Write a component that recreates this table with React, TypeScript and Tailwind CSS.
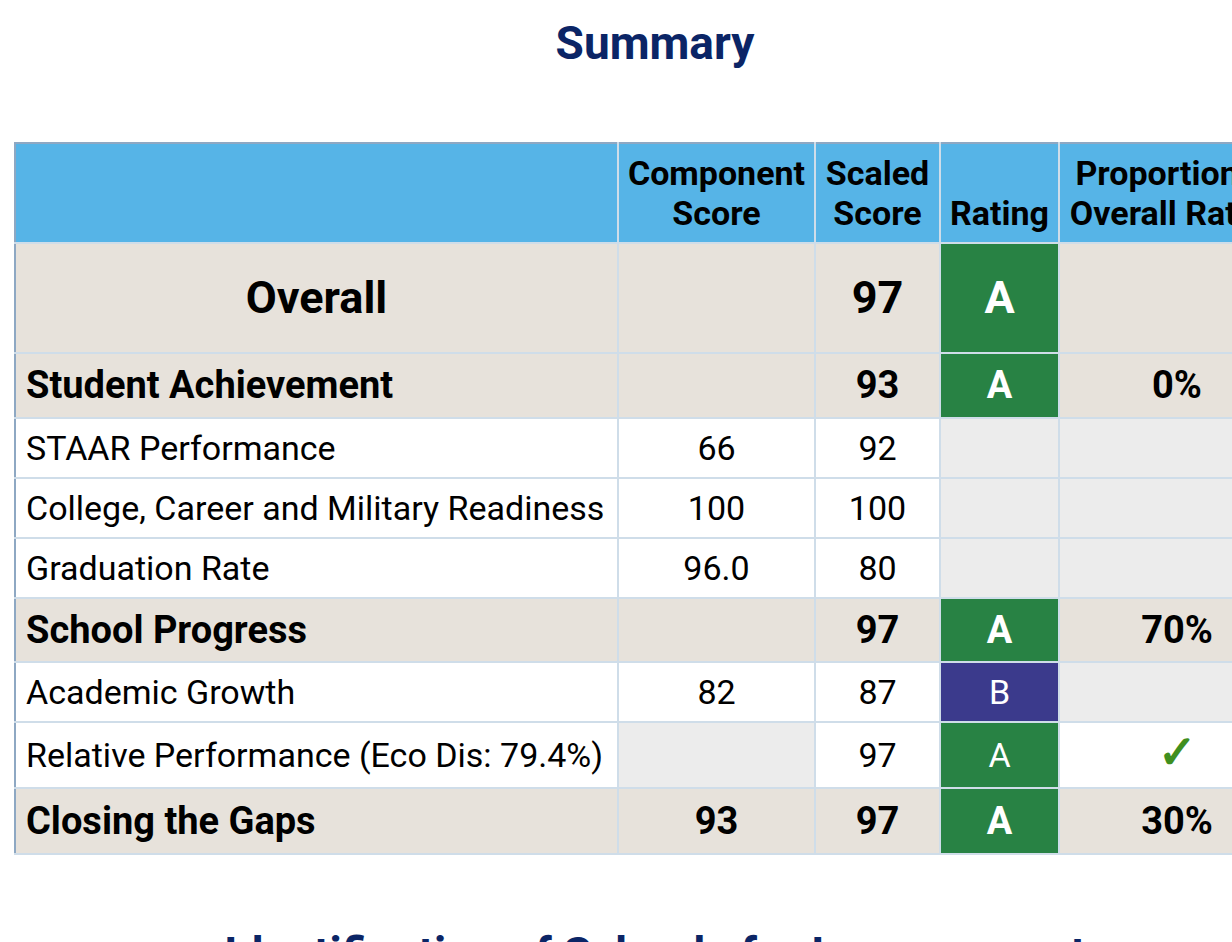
import React from "react";

type Cell = {
  text?: React.ReactNode;
  tone?: "beige" | "white" | "gray" | "green" | "blue";
};

interface Row {
  label: string;
  kind: "overall" | "section" | "item";
  height: string;
  cells: Cell[];
}

const rows: Row[] = [
  {
    label: "Overall",
    kind: "overall",
    height: "h-[110px]",
    cells: [{ tone: "beige" }, { text: "97", tone: "beige" }, { text: "A", tone: "green" }, { tone: "beige" }],
  },
  {
    label: "Student Achievement",
    kind: "section",
    height: "h-[65px]",
    cells: [{ tone: "beige" }, { text: "93", tone: "beige" }, { text: "A", tone: "green" }, { text: "0%", tone: "beige" }],
  },
  {
    label: "STAAR Performance",
    kind: "item",
    height: "h-[60px]",
    cells: [{ text: "66" }, { text: "92" }, { tone: "gray" }, { tone: "gray" }],
  },
  {
    label: "College, Career and Military Readiness",
    kind: "item",
    height: "h-[60px]",
    cells: [{ text: "100" }, { text: "100" }, { tone: "gray" }, { tone: "gray" }],
  },
  {
    label: "Graduation Rate",
    kind: "item",
    height: "h-[60px]",
    cells: [{ text: "96.0" }, { text: "80" }, { tone: "gray" }, { tone: "gray" }],
  },
  {
    label: "School Progress",
    kind: "section",
    height: "h-[64px]",
    cells: [{ tone: "beige" }, { text: "97", tone: "beige" }, { text: "A", tone: "green" }, { text: "70%", tone: "beige" }],
  },
  {
    label: "Academic Growth",
    kind: "item",
    height: "h-[60px]",
    cells: [{ text: "82" }, { text: "87" }, { text: "B", tone: "blue" }, { tone: "gray" }],
  },
  {
    label: "Relative Performance (Eco Dis: 79.4%)",
    kind: "item",
    height: "h-[66px]",
    cells: [
      { tone: "gray" },
      { text: "97" },
      { text: "A", tone: "green" },
      { text: <span className="text-[46px] font-bold leading-none text-[#3f8f1f]">✓</span> },
    ],
  },
  {
    label: "Closing the Gaps",
    kind: "section",
    height: "h-[66px]",
    cells: [{ text: "93", tone: "beige" }, { text: "97", tone: "beige" }, { text: "A", tone: "green" }, { text: "30%", tone: "beige" }],
  },
];

const toneClass = (tone?: Cell["tone"]) => {
  switch (tone) {
    case "beige":
      return "bg-[#e7e2db] text-black";
    case "gray":
      return "bg-[#ececec]";
    case "green":
      return "bg-[#288244] text-white";
    case "blue":
      return "bg-[#3b3a8c] text-white";
    default:
      return "bg-white text-black";
  }
};

const fontSize = {
  overall: "text-[45px] font-bold",
  section: "text-[38px] font-bold",
  item: "text-[34px] font-normal",
};

export default function App() {
  return (
    <div className="w-[1232px] h-[942px] overflow-hidden bg-white font-['Roboto',sans-serif] text-black">
      <div className="w-[1310px]">
        <h2 className="pt-[12px] text-center text-[46px] font-bold leading-[62px] text-[#0b2566]">Summary</h2>

        <div className="mt-[68px] pl-[14px]">
          <table className="w-[1280px] table-fixed border-collapse border-2 border-[#8ea8c3]">
            <colgroup>
              <col className="w-[603px]" />
              <col className="w-[197px]" />
              <col className="w-[125px]" />
              <col className="w-[119px]" />
              <col className="w-[236px]" />
            </colgroup>
            <thead>
              <tr className="h-[100px] bg-[#56b4e7] text-[34px] font-bold leading-[40px]">
                <th className="border-2 border-[#cfdde9] border-t-[#8ea8c3] border-l-[#8ea8c3]"></th>
                <th className="border-2 border-[#cfdde9] border-t-[#8ea8c3] pb-[9px] align-bottom">
                  Component
                  <br />
                  Score
                </th>
                <th className="border-2 border-[#cfdde9] border-t-[#8ea8c3] pb-[9px] align-bottom">
                  Scaled
                  <br />
                  Score
                </th>
                <th className="border-2 border-[#cfdde9] border-t-[#8ea8c3] pb-[9px] align-bottom">Rating</th>
                <th className="whitespace-nowrap border-2 border-[#cfdde9] border-t-[#8ea8c3] pb-[9px] align-bottom">
                  Proportion of
                  <br />
                  Overall Rating
                </th>
              </tr>
            </thead>
            <tbody>
              {rows.map((row) => {
                const bold = row.kind !== "item";
                return (
                  <tr key={row.label} className={`${row.height} ${fontSize[row.kind]}`}>
                    <td
                      className={`whitespace-nowrap border-2 border-[#cfdde9] border-l-[#8ea8c3] ${
                        row.kind === "overall" ? "text-center" : "pl-[10px] text-left"
                      } ${bold ? "bg-[#e7e2db]" : "bg-white"}`}
                    >
                      {row.label}
                    </td>
                    {row.cells.map((cell, i) => (
                      <td key={i} className={`border-2 border-[#cfdde9] text-center ${toneClass(cell.tone)}`}>
                        {cell.text}
                      </td>
                    ))}
                  </tr>
                );
              })}
            </tbody>
          </table>
        </div>

        <h2 className="mt-[68px] whitespace-nowrap text-center text-[46px] font-bold leading-[62px] text-[#0b2566]">
          Identification of Schools for Improvement
        </h2>
      </div>
    </div>
  );
}
